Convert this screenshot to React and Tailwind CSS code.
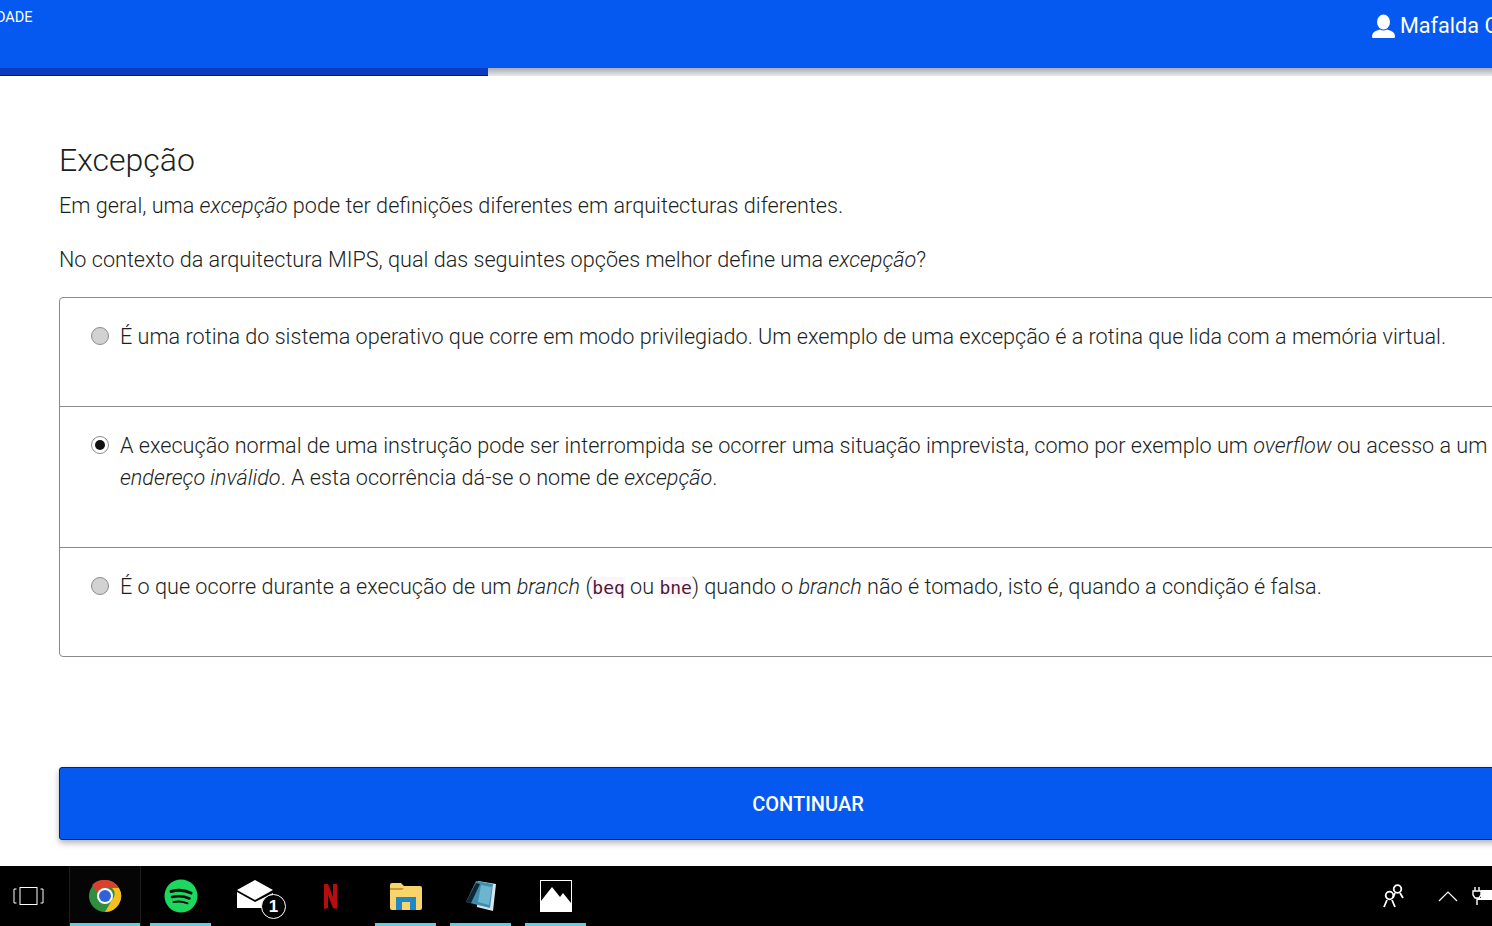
import React from "react";

const Radio = ({ checked }) => (
  <span className={`mt-[6px] mr-[11px] flex h-[18px] w-[18px] shrink-0 items-center justify-center rounded-full border border-[#8c8c8c] ${checked ? "bg-white" : "bg-[#d2d2d2]"}`}>
    {checked && <span className="h-[10px] w-[10px] rounded-full bg-[#111]" />}
  </span>
);

const Row = ({ checked, children, className }) => (
  <div className={`flex items-start pl-[31px] pt-[23px] ${className}`}>
    <Radio checked={checked} />
    <div className="min-w-0 flex-1">{children}</div>
  </div>
);

const Code = ({ children }) => (
  <code className="bg-[#fdf5f9] text-[18px] font-normal text-[#4a1a3a] [font-family:'DejaVu_Sans_Mono','Liberation_Mono',monospace]">{children}</code>
);

const Chrome = () => (
  <svg width="34" height="34" viewBox="0 0 34 34">
    <circle cx="17" cy="17" r="16" fill="#2f8f3e" />
    <path d="M17 1a16 16 0 0 1 14 8H17a8 8 0 0 0-7.500 5L4 6A16 16 0 0 1 17 1z" fill="#d9402f" />
    <path d="M31 9a16 16 0 0 1-14 24l7-12a8 8 0 0 0 0-12z" fill="#f5c01f" />
    <circle cx="17" cy="17" r="8" fill="#fff" />
    <circle cx="17" cy="17" r="6" fill="#2f62d8" />
  </svg>
);

const Spotify = () => (
  <svg width="34" height="34" viewBox="0 0 34 34">
    <circle cx="17" cy="17" r="16.500" fill="#1ed75f" />
    <path d="M7 12.500c7-2 14-1.500 20 1.500" stroke="#0c0c0c" strokeWidth="3" fill="none" strokeLinecap="round" />
    <path d="M8 18c6-1.500 12-1 17.500 1.500" stroke="#0c0c0c" strokeWidth="2.500" fill="none" strokeLinecap="round" />
    <path d="M9.500 23c5-1 9.500-.7 14 1.300" stroke="#0c0c0c" strokeWidth="2" fill="none" strokeLinecap="round" />
  </svg>
);

const Mail = () => (
  <div className="relative h-[32px] w-[50px]">
    <svg width="36" height="30" viewBox="0 0 36 30" className="absolute left-0 top-0">
      <path d="M0 10 18 0l18 10-18 10z" fill="#fff" />
      <path d="M0 12l18 10 12-6 6-3v6l-6 9H0z" fill="#fff" />
    </svg>
    <span className="absolute left-[24px] top-[14px] flex h-[25px] w-[25px] items-center justify-center rounded-full border border-white bg-black text-[17px] font-bold leading-none text-white [font-family:'Liberation_Sans',sans-serif]">1</span>
  </div>
);

const Netflix = () => (
  <svg width="13" height="25" viewBox="0 0 13 25">
    <path d="M0 0h4l5 13V0h4v25l-4-1L4 11v13l-4 1z" fill="#b80d10" />
  </svg>
);

const Folder = () => (
  <svg width="32" height="27" viewBox="0 0 32 27">
    <path d="M0 2q0-2 2-2h9l3 3h16q2 0 2 2v20q0 2-2 2H2q-2 0-2-2z" fill="#f7d56a" />
    <path d="M0 5h14l-2 2H0z" fill="#c79b32" />
    <path d="M6 14h20v13h-6v-8h-8v8H6z" fill="#1e88c9" />
  </svg>
);

const Notes = () => (
  <svg width="32" height="32" viewBox="0 0 32 32">
    <path d="M13 1 31 4 28 31 12 27z" fill="#d7e6ee" />
    <path d="M11 1 28 4 25 28 1 22z" fill="#3e8eb0" />
    <path d="M11 3 15 4 6 23 1 22z" fill="#11262f" />
    <path d="M16 5 27 7 24 25 13 22z" fill="#6db4cf" />
  </svg>
);

const Photos = () => (
  <svg width="32" height="32" viewBox="0 0 32 32">
    <rect x="0.500" y="0.500" width="31" height="31" fill="#000" stroke="#fff" />
    <path d="M1 31V21L12 7l8 10 3-4 8 10v8z" fill="#fff" />
    <rect x="1" y="27" width="30" height="4" fill="#fff" />
  </svg>
);

const Task = ({ line = true, children, className = "w-[61px] mr-[14px]" }) => (
  <div className={`relative flex h-full items-center justify-center ${className}`}>
    {children}
    {line && <span className="absolute bottom-0 left-0 right-0 h-[3px] bg-[#62cde2]" />}
  </div>
);

export default function App() {
  return (
    <div className="flex h-[926px] w-[1492px] flex-col overflow-hidden bg-white font-light text-[#1c1f22] [font-family:Roboto,'Liberation_Sans',sans-serif]">
      <header className="relative flex h-[68px] shrink-0 items-start justify-between bg-[#0558f0] text-white">
        <span className="-ml-[4px] mt-[9px] text-[14.5px] font-normal leading-[18px]">DADE</span>
        <div className="absolute left-[1372px] flex items-center whitespace-nowrap pt-[12px]">
          <svg width="23" height="25" viewBox="0 0 23 25" className="mr-[5px]">
            <ellipse cx="11.500" cy="8" rx="6.500" ry="7.500" fill="#fff" />
            <path d="M1 24q-1 0-1-1.500 0-4.500 5-6l3-1q3.500 2 7 0l3 1q5 1.500 5 6 0 1.500-1 1.500z" fill="#fff" />
          </svg>
          <span className="text-[21.6px] font-normal leading-[28px]">Mafalda C</span>
        </div>
      </header>
      <div className="flex h-[8px] shrink-0 bg-gradient-to-b from-[#a9adb2] to-[#e9eaeb]">
        <div className="h-full w-[488px] border-b border-[#04195e] bg-[#0b3cc0]" />
      </div>

      <main className="w-[1557px] flex-1 pl-[59px]">
        <h1 className="mt-[64px] text-[32px] font-light leading-[40px]">Excepção</h1>
        <p className="mt-[10px] text-[21.64px] leading-[32px]">
          Em geral, uma <em>excepção</em> pode ter definições diferentes em arquitecturas diferentes.
        </p>
        <p className="mt-[22px] text-[21.64px] leading-[32px]">
          No contexto da arquitectura MIPS, qual das seguintes opções melhor define uma <em>excepção</em>?
        </p>
        <div className="mt-[21px] w-[1498px] rounded-[4px] border border-[#8a8a8a] text-[21.64px] leading-[32px]">
          <Row className="h-[108px]">É uma rotina do sistema operativo que corre em modo privilegiado. Um exemplo de uma excepção é a rotina que lida com a memória virtual.</Row>
          <Row checked className="h-[141px] border-t border-[#8a8a8a]">
            <div className="w-[1372px]">
              A execução normal de uma instrução pode ser interrompida se ocorrer uma situação imprevista, como por exemplo um <em>overflow</em> ou acesso a um <em>endereço inválido</em>. A esta ocorrência dá-se o nome de <em>excepção</em>.
            </div>
          </Row>
          <Row className="h-[109px] border-t border-[#8a8a8a]">
            É o que ocorre durante a execução de um <em>branch</em> (<Code>beq</Code> ou <Code>bne</Code>) quando o <em>branch</em> não é tomado, isto é, quando a condição é falsa.
          </Row>
        </div>
        <button className="mt-[110px] flex h-[73px] w-[1498px] items-center justify-center rounded-[3px] border border-[#03217a] bg-[#0558f0] text-[20px] font-medium text-white shadow-[0_3px_6px_rgba(0,0,0,0.3)]">
          CONTINUAR
        </button>
      </main>

      <footer className="relative flex h-[60px] shrink-0 items-center bg-black">
        <div className="flex h-full w-[69px] items-center pl-[13px]">
          <svg width="31" height="18" viewBox="0 0 31 18">
            <rect x="7" y="0.500" width="17" height="17" fill="none" stroke="#fff" strokeWidth="1" />
            <path d="M3.500 2H1v14h2.500M27.500 2H30v14h-2.500" fill="none" stroke="#fff" strokeWidth="1" />
          </svg>
        </div>
        <Task className="mr-[9px] w-[72px] border-x border-[#1c1c1c] bg-[#050505]"><Chrome /></Task>
        <Task><Spotify /></Task>
        <Task line={false} className="mr-[14px] w-[61px] justify-start pl-[12px]"><Mail /></Task>
        <Task line={false}><Netflix /></Task>
        <Task><Folder /></Task>
        <Task><Notes /></Task>
        <Task><Photos /></Task>
        <div className="absolute left-[1382px] top-[17px] flex items-center">
          <svg width="26" height="26" viewBox="0 0 26 26">
            <circle cx="15.500" cy="6" r="3.800" fill="none" stroke="#fff" strokeWidth="1.800" />
            <path d="M11 15l2-5M18 10l3 5" stroke="#fff" strokeWidth="1.800" fill="none" />
            <circle cx="7.500" cy="12.500" r="3.800" fill="none" stroke="#fff" strokeWidth="1.800" />
            <path d="M2 24l3-7M10 17l3 7" stroke="#fff" strokeWidth="1.800" fill="none" />
          </svg>
          <svg width="20" height="12" viewBox="0 0 20 12" className="ml-[30px]">
            <path d="M1 11 10 2l9 9" fill="none" stroke="#fff" strokeWidth="1.200" />
          </svg>
          <svg width="20" height="18" viewBox="0 0 20 18" className="ml-[14px]">
            <path d="M3 0v4M7 0v4M1 4h8v4l-2 3H3L1 8zM5 11v7" fill="none" stroke="#fff" strokeWidth="1.400" />
            <path d="M9 3h11v10H5v-2h4z" fill="#fff" />
          </svg>
        </div>
      </footer>
    </div>
  );
}
